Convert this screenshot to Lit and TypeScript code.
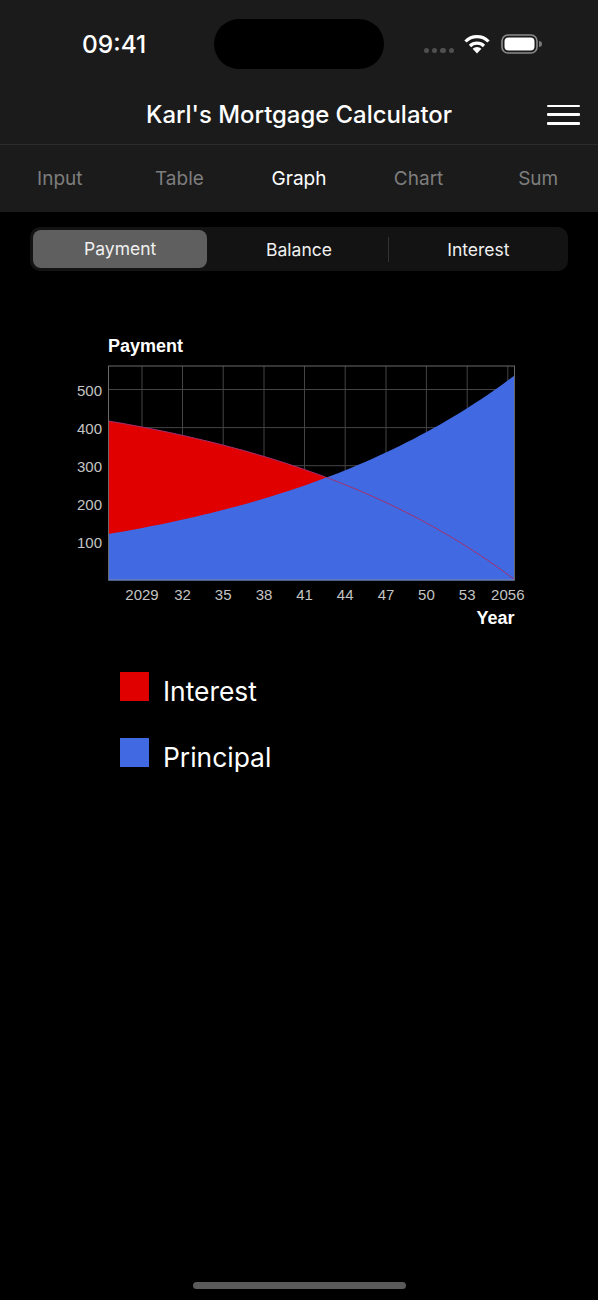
import { LitElement, html, css, svg } from "lit";
import { customElement } from "lit/decorators.js";

const L = 108.5, R = 514.5, T = 366, B = 580;
const xGrid = [142, 182.5, 223.2, 264, 304.5, 345.2, 386, 426.4, 467.2, 507.8];
const xLabels = ["2029", "32", "35", "38", "41", "44", "47", "50", "53", "2056"];
const yVals = [100, 200, 300, 400, 500];
const yOf = (v: number) => B - v * 0.381;
const principalH = (t: number) => 46 * Math.pow(204.5 / 46, t);
const TOTAL = 205;
const samples = Array.from({ length: 61 }, (_, i) => i / 60);
const xAt = (t: number) => (L + t * (R - L)).toFixed(1);
const principalLine = samples.map((t) => `${xAt(t)},${(B - principalH(t)).toFixed(1)}`).join(" ");
const interestLine = samples
  .map((t) => `${xAt(t)},${(B - Math.max(0, TOTAL - principalH(t))).toFixed(1)}`)
  .join(" ");
const area = (line: string) => `${L},${B} ${line} ${R},${B}`;

const tabs = ["Input", "Table", "Graph", "Chart", "Sum"];

@customElement("app-root")
export class AppRoot extends LitElement {
  static styles = css`
    :host { display: block; width: 598px; height: 1300px; background: #000; color: #fff; font-family: Inter, "Noto Sans", sans-serif; overflow: hidden; }
    .page { height: 1300px; display: flex; flex-direction: column; }
    .head { background: #1b1b1b; height: 212px; display: flex; flex-direction: column; flex: none; }
    .status { height: 88px; display: grid; grid-template-columns: 214px 170px 1fr; padding-top: 19px; box-sizing: border-box; }
    .time { font-size: 24.5px; font-weight: 500; padding-left: 82px; padding-top: 10px; line-height: 30px; letter-spacing: 0; }
    .island { height: 50px; background: #000; border-radius: 25px; }
    .sys { display: flex; align-items: flex-start; padding: 15px 0 0 40px; }
    .dots { display: flex; gap: 3px; margin-top: 14px; margin-right: 10px; }
    .dots i { width: 5.2px; height: 5.2px; border-radius: 50%; background: #505050; display: block; }
    .wifi { margin-right: 11px; display: block; }
    .nav { height: 56px; flex: none; position: relative; border-bottom: 1px solid #2b2b2b; display: flex; align-items: center; justify-content: center; }
    .title { font-size: 23.9px; font-weight: 500; line-height: 52px; margin-bottom: 2px; }
    .burger { position: absolute; left: 547px; top: 16.6px; width: 33px; display: flex; flex-direction: column; gap: 6px; }
    .burger i { display: block; height: 2.7px; background: #fff; border-radius: 1px; }
    .tabs { flex: 1; display: grid; grid-template-columns: repeat(5, 1fr); align-items: center; text-align: center; font-size: 19px; color: #7e7e7e; padding-bottom: 1px; }
    .tabs .on { color: #fff; font-weight: 400; }
    .seg { margin: 15px 30px 0; height: 44px; background: #131313; border-radius: 10px; display: grid; grid-template-columns: repeat(3, 1fr); align-items: center; text-align: center; font-size: 17.5px; flex: none; color: #f0f0f0; }
    .seg .sel { background: #5f5f5f; height: 38px; line-height: 38px; margin: 0 2px 0 3px; border-radius: 8px; }
    .seg .mid { position: relative; }
    .seg .mid::after { content: ""; position: absolute; right: 0; top: -2px; bottom: -2px; width: 1px; background: #333; }
    .chart { display: block; margin-top: 59px; flex: none; }
    .grid { stroke: #444; stroke-width: 1; fill: none; }
    .frame { stroke: #6a6a6a; stroke-width: 1; fill: none; }
    .lab { font-family: "Liberation Sans", Arial, sans-serif; font-size: 15px; fill: #c4c4c4; }
    .axt { font-family: "Liberation Sans", Arial, sans-serif; font-size: 18px; font-weight: 700; fill: #fff; }
    .legend { margin-top: 42px; padding-left: 120px; display: flex; flex-direction: column; gap: 37px; flex: none; }
    .li { display: flex; align-items: center; gap: 14px; height: 29px; font-size: 26.4px; }
    .sw { width: 29px; height: 29px; flex: none; display: block; }
    .red { background: #e00000; }
    .blue { background: #4169e1; }
    .li span { position: relative; top: 4px; }
    .home { margin: auto auto 11px; width: 213px; height: 7px; border-radius: 4px; background: #5a5a5a; flex: none; }
  `;

  render() {
    return html`<div class="page">
      <div class="head">
        <div class="status">
          <div class="time">09:41</div>
          <div class="island"></div>
          <div class="sys">
            <div class="dots"><i></i><i></i><i></i><i></i></div>
            <svg class="wifi" width="26" height="20" viewBox="0 0 26 20">
              <path d="M1.5 7.5 A16 16 0 0 1 24.5 7.5" fill="none" stroke="#fff" stroke-width="3.2"/>
              <path d="M6 12 A10 10 0 0 1 20 12" fill="none" stroke="#fff" stroke-width="3.2"/>
              <path d="M13 19.5 L8.6 14.8 A6.4 6.4 0 0 1 17.4 14.8 Z" fill="#fff"/>
            </svg>
            <svg width="42" height="20" viewBox="0 0 42 20">
              <rect x="1" y="1" width="35" height="18" rx="6" fill="none" stroke="#8a8a8a" stroke-width="1.6"/>
              <rect x="3.5" y="3.5" width="30" height="13" rx="4" fill="#fff"/>
              <path d="M38 7 A3 3 0 0 1 38 13 Z" fill="#777"/>
            </svg>
          </div>
        </div>
        <div class="nav">
          <div class="title">Karl's Mortgage Calculator</div>
          <div class="burger"><i></i><i></i><i></i></div>
        </div>
        <div class="tabs">
          ${tabs.map((t) => html`<div class=${t === "Graph" ? "on" : ""}>${t}</div>`)}
        </div>
      </div>
      <div class="seg">
        <div class="sel">Payment</div>
        <div class="mid">Balance</div>
        <div>Interest</div>
      </div>
      <svg class="chart" width="598" height="300" viewBox="0 330 598 300">
        ${xGrid.map((x) => svg`<line class="grid" x1=${x} x2=${x} y1=${T} y2=${B}></line>`)}
        ${yVals.map((v) => svg`<line class="grid" x1=${L} x2=${R} y1=${yOf(v)} y2=${yOf(v)}></line>`)}
        <polygon points=${area(interestLine)} fill="#e00000"></polygon>
        <polygon points=${area(principalLine)} fill="#4169e1"></polygon>
        <polyline points=${interestLine} fill="none" stroke="#a2306e" stroke-width="1"></polyline>
        <rect class="frame" x=${L} y=${T} width=${R - L} height=${B - T}></rect>
        <line x1=${L} x2=${R} y1=${B} y2=${B} stroke="#6f87d8" stroke-width="1"></line>
        ${yVals.map((v) => svg`<text class="lab" x="102" y=${yOf(v) + 6} text-anchor="end">${v}</text>`)}
        ${xLabels.map((s, i) => svg`<text class="lab" x=${xGrid[i]} y="599.5" text-anchor="middle">${s}</text>`)}
        <text class="axt" x="108" y="351.5">Payment</text>
        <text class="axt" x="514.5" y="624" text-anchor="end">Year</text>
      </svg>
      <div class="legend">
        <div class="li"><i class="sw red"></i><span>Interest</span></div>
        <div class="li"><i class="sw blue"></i><span>Principal</span></div>
      </div>
      <div class="home"></div>
    </div>`;
  }
}
